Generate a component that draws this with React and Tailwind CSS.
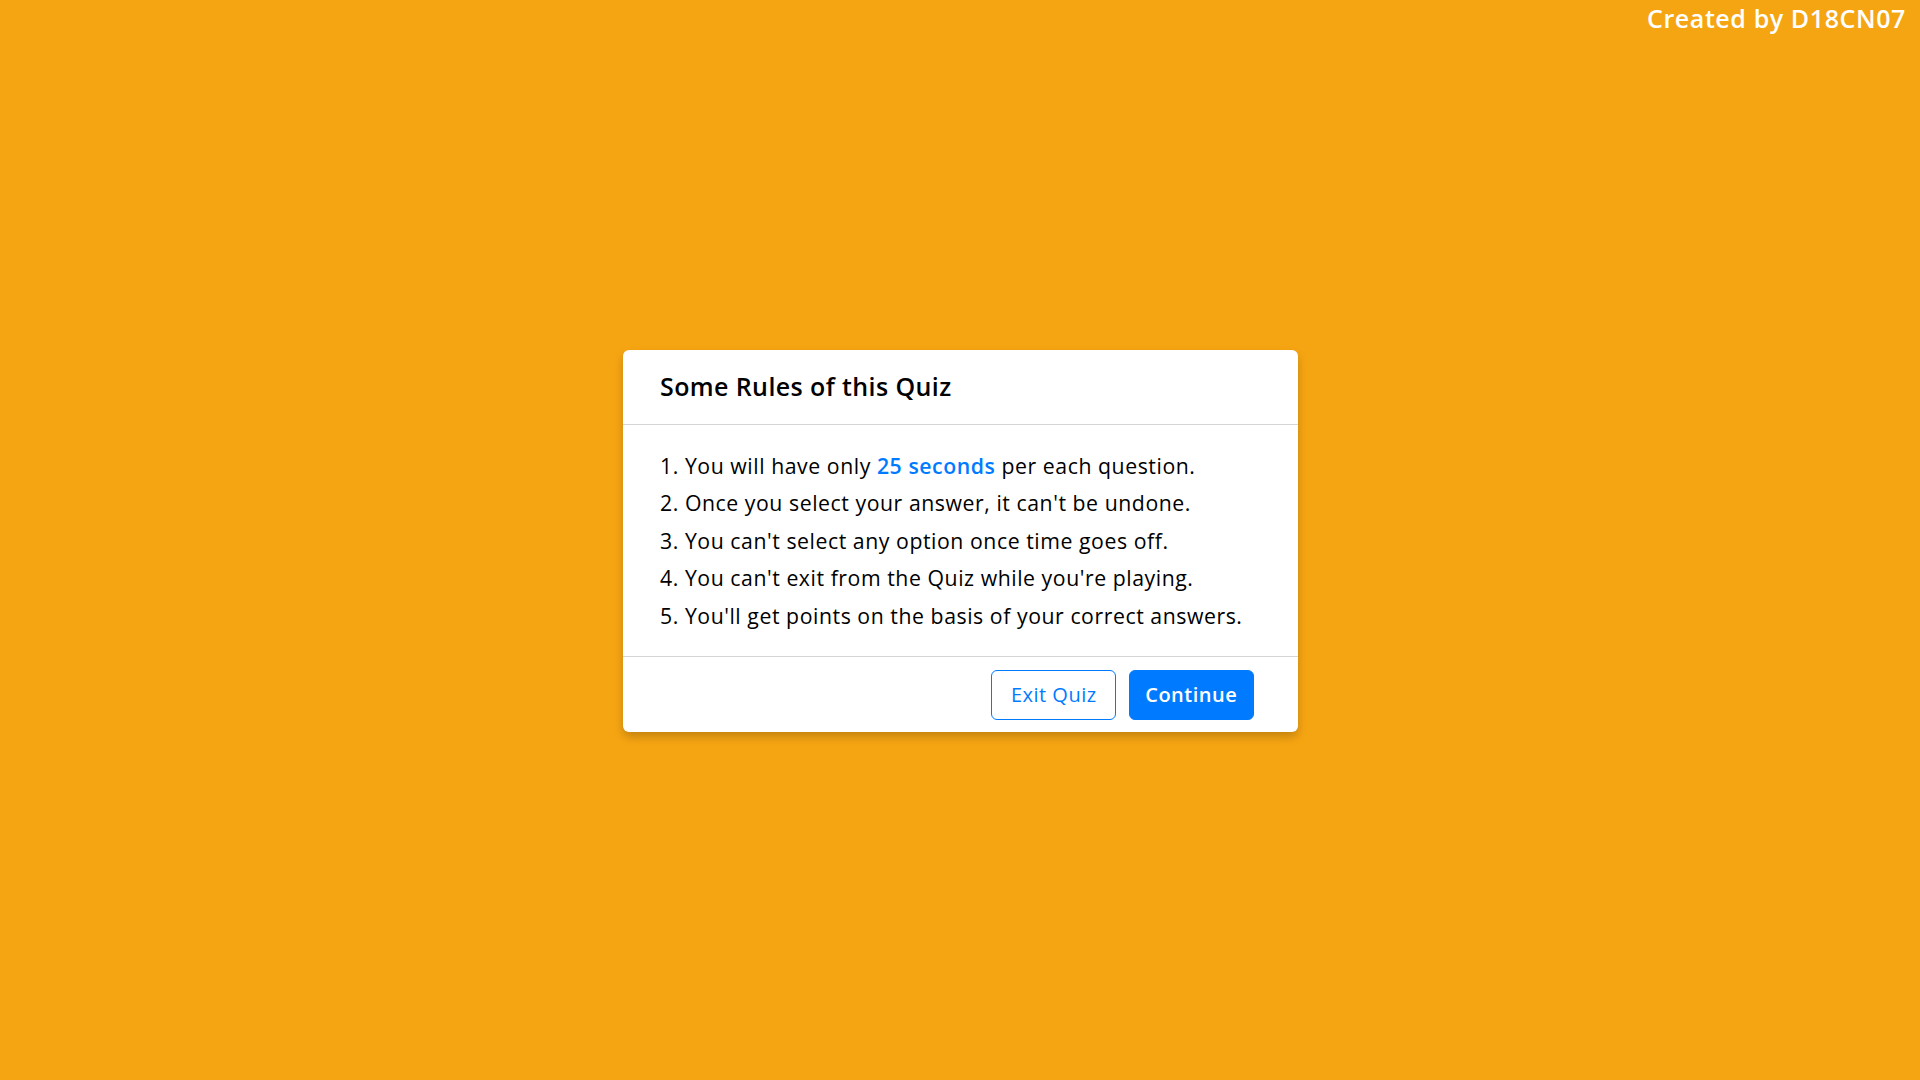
export default function App() {
  const font = { fontFamily: '"Open Sans", "Noto Sans", sans-serif' };
  return (
    <div className="w-full h-[1080px] bg-[#f6a512] relative flex items-center justify-center" style={font}>
      <div className="absolute top-[0px] right-[14px] text-white font-semibold text-[25px] leading-[36px] tracking-[0.6px]">Created by D18CN07</div>
      <div className="w-[675px] bg-white rounded-[6px] shadow-[0_5px_10px_rgba(0,0,0,0.2)] mt-[2px]">
        <div className="h-[75px] flex items-center px-[37.5px] border-b border-[#d5d5d5]">
          <span className="text-[25px] font-semibold text-black tracking-[0.4px]">Some Rules of this Quiz</span>
        </div>
        <div className="px-[37.5px] py-[18.75px] border-b border-[#d5d5d5] text-[21.25px] leading-[31.25px] text-black tracking-[0.55px]">
          <div className="my-[6.25px]">1. You will have only <span className="font-semibold text-[#007bff]">25 seconds</span> per each question.</div>
          <div className="my-[6.25px]">2. Once you select your answer, it can't be undone.</div>
          <div className="my-[6.25px]">3. You can't select any option once time goes off.</div>
          <div className="my-[6.25px]">4. You can't exit from the Quiz while you're playing.</div>
          <div className="my-[6.25px]">5. You'll get points on the basis of your correct answers.</div>
        </div>
        <div className="h-[75px] flex items-center justify-end px-[37.5px]">
          <button className="mx-[6.25px] h-[50px] w-[125px] rounded-[6px] border border-[#007bff] bg-white text-[#007bff] text-[20px] font-medium tracking-[0.5px]">Exit Quiz</button>
          <button className="mx-[6.25px] h-[50px] w-[125px] rounded-[6px] border border-[#007bff] bg-[#007bff] text-white text-[20px] font-semibold tracking-[0.5px]">Continue</button>
        </div>
      </div>
    </div>
  );
}
